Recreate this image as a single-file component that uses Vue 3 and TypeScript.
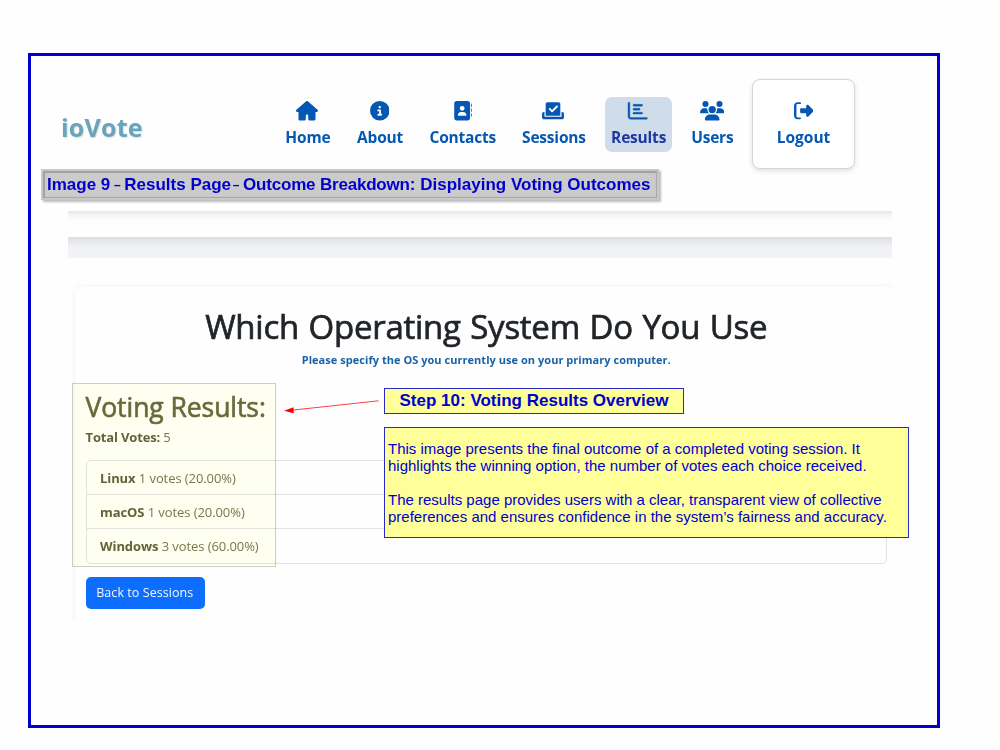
<script setup lang="ts">
interface Shape { d: string; box: string; w: number; h: number }
interface NavItem { label: string; icon: Shape; active?: boolean; card?: boolean; width: number }
interface VoteRow { name: string; votes: number; share: string }

const nav: NavItem[] = [
  { label: 'Home', width: 59, icon: { box: '0 0 576 512', w: 22, h: 19.5, d: 'M575.800 255.500c0 18-15 32.100-32 32.100h-32l.7 160.200c0 2.700-.2 5.400-.5 8.100V472c0 22.100-17.900 40-40 40H360c-22.100 0-40-17.900-40-40v-88c0-17.700-14.300-32-32-32h-0c-17.700 0-32 14.300-32 32v88c0 22.100-17.900 40-40 40H104c-22.100 0-40-17.900-40-40V287.600H32c-18 0-32-14-32-32.100 0-9 3-17 10-24L266.400 8c7-7 15-8 22-8s15 2 21 7l255.400 224.500c8 7 12 15 11 24z' } },
  { label: 'About', width: 61, icon: { box: '0 0 512 512', w: 19.5, h: 19.5, d: 'M256 512A256 256 0 1 0 256 0a256 256 0 1 0 0 512zM216 336h24V272H216c-13.300 0-24-10.700-24-24s10.700-24 24-24h48c13.300 0 24 10.700 24 24v88h8c13.300 0 24 10.700 24 24s-10.700 24-24 24H216c-13.300 0-24-10.700-24-24s10.700-24 24-24zm40-208a32 32 0 1 1 0 64 32 32 0 1 1 0-64z' } },
  { label: 'Contacts', width: 80, icon: { box: '0 0 512 512', w: 19.5, h: 19.5, d: 'M96 0C60.700 0 32 28.700 32 64V448c0 35.300 28.700 64 64 64H384c35.300 0 64-28.700 64-64V64c0-35.300-28.700-64-64-64H96zM208 288h64c44.200 0 80 35.800 80 80c0 8.800-7.200 16-16 16H144c-8.800 0-16-7.200-16-16c0-44.200 35.800-80 80-80zm-32-96a64 64 0 1 1 128 0 64 64 0 1 1 -128 0zM512 80c0-8.800-7.200-16-16-16s-16 7.200-16 16v64c0 8.800 7.200 16 16 16s16-7.200 16-16V80zM496 192c-8.800 0-16 7.200-16 16v64c0 8.800 7.200 16 16 16s16-7.200 16-16V208c0-8.800-7.200-16-16-16zm16 144c0-8.800-7.200-16-16-16s-16 7.200-16 16v64c0 8.800 7.200 16 16 16s16-7.200 16-16V336z' } },
  { label: 'Sessions', width: 78, icon: { box: '0 0 576 512', w: 22, h: 19.5, d: 'M96 80c0-26.500 21.500-48 48-48H432c26.500 0 48 21.500 48 48V384H96V80zm313 47c-9.400-9.400-24.600-9.400-33.900 0l-111 111-47-47c-9.400-9.400-24.600-9.400-33.900 0s-9.400 24.600 0 33.900l64 64c9.400 9.400 24.600 9.400 33.900 0L409 161c9.400-9.400 9.400-24.600 0-33.900zM0 336c0-26.500 21.500-48 48-48H64V416H512V288h16c26.500 0 48 21.500 48 48v96c0 26.500-21.500 48-48 48H48c-26.500 0-48-21.500-48-48V336z' } },
  { label: 'Results', width: 67, active: true, icon: { box: '0 0 512 512', w: 19.5, h: 19.5, d: 'M24 32c13.300 0 24 10.700 24 24V408c0 13.300 10.700 24 24 24H488c13.300 0 24 10.700 24 24s-10.700 24-24 24H72c-39.800 0-72-32.200-72-72V56C0 42.700 10.700 32 24 32zM128 112c0-13.300 10.700-24 24-24l208 0c13.300 0 24 10.700 24 24s-10.700 24-24 24l-208 0c-13.300 0-24-10.700-24-24zm24 80H296c13.300 0 24 10.700 24 24s-10.700 24-24 24H152c-13.300 0-24-10.700-24-24s10.700-24 24-24zm0 104H360c13.300 0 24 10.700 24 24s-10.700 24-24 24H152c-13.300 0-24-10.700-24-24s10.700-24 24-24z' } },
  { label: 'Users', width: 56, icon: { box: '0 0 640 512', w: 24.4, h: 19.5, d: 'M144 0a80 80 0 1 1 0 160A80 80 0 1 1 144 0zM512 0a80 80 0 1 1 0 160A80 80 0 1 1 512 0zM0 298.700C0 239.800 47.800 192 106.700 192h42.700c15.900 0 31 3.500 44.600 9.700c-1.300 7.200-1.900 14.700-1.900 22.300c0 38.200 16.800 72.500 43.300 96H21.300C9.600 320 0 310.400 0 298.700zM405.300 320h-.7c26.600-23.500 43.300-57.800 43.300-96c0-7.600-.7-15-1.900-22.300c13.600-6.300 28.700-9.700 44.600-9.700h42.700C592.200 192 640 239.800 640 298.700c0 11.800-9.600 21.300-21.300 21.300H405.300zM224 224a96 96 0 1 1 192 0 96 96 0 1 1 -192 0zM128 485.300C128 411.700 187.700 352 261.300 352H378.700C452.300 352 512 411.700 512 485.300c0 14.700-11.900 26.700-26.700 26.700H154.700c-14.700 0-26.700-11.900-26.700-26.700z' } },
  { label: 'Logout', width: 103, card: true, icon: { box: '0 0 512 512', w: 19.5, h: 19.5, d: 'M377.900 105.900L500.700 228.700c7.200 7.200 11.300 17.100 11.300 27.300s-4.100 20.100-11.300 27.300L377.900 406.100c-6.400 6.400-15 9.900-24 9.900c-18.700 0-33.900-15.200-33.900-33.900V320H192c-17.700 0-32-14.300-32-32V224c0-17.700 14.300-32 32-32H320V129.900c0-18.700 15.200-33.900 33.900-33.900c9 0 17.600 3.600 24 9.900zM160 80H96c-17.700 0-32 14.300-32 32V400c0 17.700 14.300 32 32 32h64c13.300 0 24 10.700 24 24s-10.700 24-24 24H96c-53 0-96-43-96-96V128C0 75 43 32 96 32h64c13.300 0 24 10.700 24 24s-10.700 24-24 24z' } },
]

const rows: VoteRow[] = [
  { name: 'Linux', votes: 1, share: '20.00%' },
  { name: 'macOS', votes: 1, share: '20.00%' },
  { name: 'Windows', votes: 3, share: '60.00%' },
]
</script>

<template>
  <main class="frame">
    <header class="top">
      <span class="logo">ioVote</span>
      <nav class="nav">
        <a v-for="n in nav" :key="n.label" class="item" :class="{ active: n.active, card: n.card }" :style="{ width: n.width + 'px' }">
          <svg :viewBox="n.icon.box" :width="n.icon.w" :height="n.icon.h"><path :d="n.icon.d" fill-rule="evenodd" /></svg>
          <span class="lbl">{{ n.label }}</span>
        </a>
      </nav>
    </header>
    <div class="strip thin"></div>
    <div class="strip thick"></div>

    <div class="clip">
      <section class="panel">
        <h1>Which Operating System Do You Use</h1>
        <p class="sub">Please specify the OS you currently use on your primary computer.</p>
        <h2>Voting Results:</h2>
        <p class="total"><b>Total Votes:</b> 5</p>
        <ul>
          <li v-for="r in rows" :key="r.name"><b>{{ r.name }}</b> {{ r.votes }} votes ({{ r.share }})</li>
        </ul>
        <button>Back to Sessions</button>
      </section>
    </div>

    <div class="caption">
      <span class="c1">Image 9 </span><span class="dash">– </span><span class="c2">Results Page </span><span class="dash">– </span><span class="c3">Outcome Breakdown: </span><span class="c4">Displaying Voting Outcomes</span>
    </div>
    <div class="mark"></div>
    <svg class="arrow" width="100" height="20" viewBox="0 0 100 20">
      <path d="M8 12.500L97.500 2.800" stroke="#ff4040" stroke-width="1" />
      <path d="M3 12.700L12.500 9.200L12.700 15.200Z" fill="#f00" />
    </svg>
    <div class="note step">Step 10: Voting Results Overview</div>
    <div class="note text">
      <p>This image presents the final outcome of a completed voting session. It<br>highlights the winning option, the number of votes each choice received.</p>
      <p>The results page provides users with a clear, transparent view of collective<br>preferences and ensures confidence in the system’s fairness and accuracy.</p>
    </div>
  </main>
</template>

<style>
html, body { margin: 0; background: #fefefe; }
</style>
<style scoped>
* { box-sizing: border-box; }
h1, h2, p, ul { margin: 0; padding: 0; font-weight: inherit; }
.frame { position: relative; width: 912px; height: 675px; margin: 53px 0 0 28px; border: 3px solid #0000cd; background: #fefefe; font-family: "Open Sans", "Noto Sans", sans-serif; color: #212529; }
.top { display: flex; justify-content: space-between; align-items: center; height: 137px; padding: 0 82px 0 30px; }
.logo { font-size: 25px; font-weight: 700; line-height: 34px; margin-top: 4px; color: #68a5bd; text-shadow: 1px 1px 1px rgba(0,0,0,.14); letter-spacing: .2px; }
.nav { display: flex; align-items: center; gap: 12.2px; }
.item { display: flex; flex-direction: column; align-items: center; height: 55px; padding-top: 4px; border-radius: 7px; color: #0458b3; flex: none; }
.item svg { fill: #0458b3; display: block; flex: none; }
.lbl { font-size: 15.5px; font-weight: 700; line-height: 20px; margin: 6px 0 0 1px; letter-spacing: -.2px; white-space: nowrap; }
.active { background: #cfdcea; }
.active svg { stroke: #0458b3; stroke-width: 10px; overflow: visible; }
.active .lbl { color: #1d36a0; }
.card { height: 90px; margin-top: -1px; padding-top: 21px; border: 1px solid #d6d6d8; border-radius: 8px; background: #fff; box-shadow: 0 2px 5px rgba(0,0,0,.12); }
.card .lbl { letter-spacing: 0; margin-left: 0; }
.strip { width: 824px; margin-left: 37px; }
.thin { height: 10px; margin-top: 18px; background: linear-gradient(#e8e8e8, #f7f7f7 50%, #fefefe); }
.thick { height: 21px; margin-top: 16px; background: linear-gradient(#dcdee2, #ebedf1 35%, #f1f3f7 60%); }
.clip { width: 824px; height: 370px; margin: -6px 0 0 37px; padding: 35px 0 0 7px; overflow: hidden; clip-path: inset(6px 0 0 0); }
.panel { width: 823px; height: 360px; padding: 19px 11px 0 10.500px; background: #fefefe; border-radius: 8px; box-shadow: 0 0 7px rgba(0,0,0,.06); }
h1 { font-size: 33px; line-height: 42px; letter-spacing: -.26px; word-spacing: 1.3px; text-align: center; white-space: nowrap; -webkit-text-stroke: .7px currentColor; }
.sub { margin-top: 3px; font-size: 11px; line-height: 17px; font-weight: 700; letter-spacing: .04px; text-align: center; color: #1a62a8; white-space: nowrap; }
h2 { margin-top: 21px; font-size: 26.500px; line-height: 36px; letter-spacing: -.06px; color: #68693c; white-space: nowrap; -webkit-text-stroke: .6px currentColor; }
.total { margin-top: 3px; font-size: 13px; line-height: 18px; letter-spacing: -.15px; color: #77784d; }
.total b, li b { color: #62633a; font-weight: 700; }
ul { list-style: none; width: 801px; margin-top: 13.500px; border: 1px solid #dfe2e5; border-radius: 5px; }
li { height: 34px; padding-left: 13.500px; font-size: 13px; line-height: 34px; letter-spacing: -.08px; color: #77784d; border-bottom: 1px solid #dfe2e5; }
li:last-child { border-bottom: 0; }
button { display: block; width: 119.500px; height: 32px; margin-top: 13px; padding: 0 1px 0 0; border: 0; border-radius: 5px; background: #0d6efd; color: #f2f7ff; font: 400 12.500px "Open Sans", sans-serif; letter-spacing: .06px; white-space: nowrap; }
.caption { position: absolute; left: 10px; top: 113px; display: flex; width: 618px; height: 31px; padding-left: 4px; border: 2px solid #c8c8c8; box-shadow: inset 2px 2px 1px #a0a0a0, inset -1px -1px 1px #a6a6a6, 2px 2px 2px #bbb; background: #cbcbcb; font: 700 17px/28px "Liberation Sans", sans-serif; color: #0000cd; white-space: nowrap; }
.c1 { width: 67px; }
.c2 { width: 108.500px; }
.c3 { width: 177.200px; letter-spacing: -.2px; }
.dash { width: 10.300px; font-size: 12px; }
.mark { position: absolute; left: 41px; top: 327px; width: 204px; height: 184px; background: #fffff2; border: 1px solid #cfcfc6; mix-blend-mode: multiply; }
.arrow { position: absolute; left: 250px; top: 342px; }
.note { position: absolute; left: 353px; background: #ffff99; border: 1px solid #2b2bc8; color: #0000cd; font-family: "Liberation Sans", sans-serif; white-space: nowrap; }
.step { top: 332px; width: 300px; height: 26px; font-size: 17px; font-weight: 700; line-height: 24px; text-align: center; }
.text { top: 371px; width: 525px; height: 111px; padding: 12px 0 0 3px; font-size: 15px; line-height: 17px; }
.text p + p { margin-top: 17px; }
</style>
